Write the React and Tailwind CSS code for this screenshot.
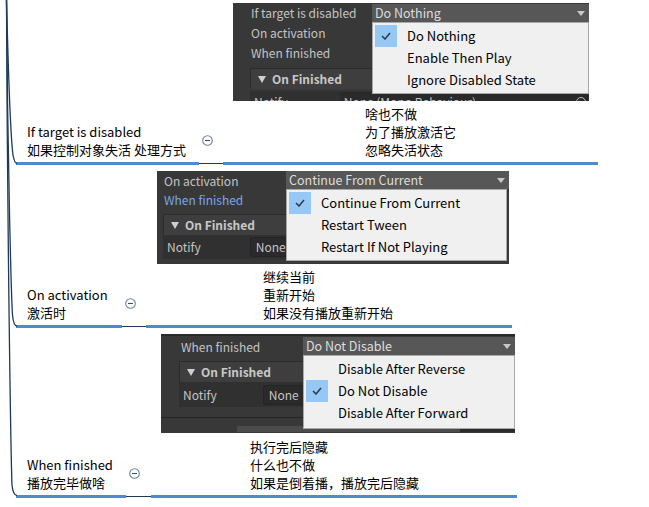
import React from 'react';

const Check = () => (
  <svg width="10" height="8" viewBox="0 0 10 8" fill="none">
    <polyline points="1,4 4,7 9,1" stroke="#2c3846" strokeWidth="1.5" />
  </svg>
);

const Arrow = () => (
  <svg width="8" height="5" viewBox="0 0 8 5">
    <polygon points="0,0 8,0 4,5" fill="#c8c8c8" />
  </svg>
);

const Tri = () => (
  <svg width="8" height="7" viewBox="0 0 8 7">
    <polygon points="0,0 8,0 4,7" fill="#cfcfcf" />
  </svg>
);

const Collapse = () => (
  <svg width="11" height="11" viewBox="0 0 11 11" className="mb-[13px] shrink-0">
    <circle cx="5.5" cy="5.5" r="4.8" fill="#fff" stroke="#6e84a0" strokeWidth="1.1" />
    <line x1="3" y1="5.5" x2="8" y2="5.5" stroke="#3c4f66" strokeWidth="1.1" />
  </svg>
);

function Dropdown({ value }) {
  return (
    <div className="flex h-[18px] items-center justify-between bg-[#575757] pl-[3px] pr-[4px] text-[12.5px] text-[#dedede]">
      <span>{value}</span>
      <Arrow />
    </div>
  );
}

function Popup({ items, className }) {
  return (
    <div className={`absolute border border-[#a8a8a8] bg-[#f0f0f0] pt-[2px] ${className}`}>
      {items.map((it) => (
        <div key={it.label} className="flex h-[22px] items-center">
          <div
            className={`ml-[2px] flex h-[22px] w-[22px] items-center justify-center ${
              it.checked ? 'bg-[#96c8f6]' : ''
            }`}
          >
            {it.checked && <Check />}
          </div>
          <span className="ml-[10px] text-[13px] text-black">{it.label}</span>
        </div>
      ))}
    </div>
  );
}

function Header() {
  return (
    <div className="flex h-[21px] items-center gap-[6px] border-l border-t border-[#2b2b2b] bg-[#3e3e3e] pl-[7px] text-[12px] font-bold text-[#c8c8c8]">
      <Tri />
      <span>On Finished</span>
    </div>
  );
}

function Underline({ a, b, c }) {
  return (
    <div className="mt-[3px] flex h-[3px] items-center">
      <div className={`ml-[16px] h-[3px] bg-[#5288d0] ${a}`} />
      <div className={`h-[1px] bg-[#1f3a58] ${b}`} />
      <div className={`h-[3px] bg-[#5288d0] ${c}`} />
    </div>
  );
}

function Notes({ lines, className }) {
  return (
    <div className={`text-[13px] leading-[18px] text-black ${className}`}>
      {lines.map((l) => (
        <div key={l}>{l}</div>
      ))}
    </div>
  );
}

export default function App() {
  return (
    <div className="relative h-[507px] w-[649px] overflow-hidden bg-white font-['Noto_Sans_CJK_SC','Noto_Sans',sans-serif] whitespace-nowrap">
      {/* connectors from the parent topic above */}
      <svg className="pointer-events-none absolute left-0 top-0" width="24" height="507" fill="none">
        <path d="M6.5 0 C8 60 11 140 13 155 Q14.5 163.5 17 163.5" stroke="#1f3a58" strokeWidth="1.3" />
        <path d="M6.5 0 C7.5 150 11 290 12.5 315 Q13.5 326 17 326" stroke="#1f3a58" strokeWidth="1.3" />
        <path d="M6.5 0 C7.5 250 11 460 12 485 Q13 495.5 17 495.5" stroke="#1f3a58" strokeWidth="1.3" />
      </svg>

      {/* section 1 */}
      <div className="pt-[3px]">
        <div className="relative ml-[233px] h-[98px] w-[356px] overflow-hidden bg-[#383838] text-[12px]">
          <div className="flex h-[88px]">
            <div className="flex w-[139px] flex-col pl-[17px] text-[#c4c4c4]">
              <div className="h-[20px] pl-[1px] leading-[20px]">If target is disabled</div>
              <div className="h-[20px] pl-[1px] leading-[20px]">On activation</div>
              <div className="h-[20px] pl-[1px] leading-[20px]">When finished</div>
              <div className="mt-[5px]">
                <Header />
              </div>
            </div>
            <div className="flex-1 pt-[1px]">
              <Dropdown value="Do Nothing" />
            </div>
          </div>
          <div className="ml-[17px] flex h-[22px] items-center bg-[#303030] text-[#c4c4c4]">
            <span className="pl-[4px]">Notify</span>
            <div className="ml-[52px] flex h-[20px] flex-1 items-center justify-between rounded-[3px] bg-[#2a2a2a] pl-[4px] pr-[3px]">
              <span>None (Mono Behaviour)</span>
              <span className="h-[10px] w-[10px] rounded-full border border-[#bbb]" />
            </div>
          </div>
          <Popup
            className="left-[139px] top-[19px] h-[72px] w-[217px]"
            items={[
              { label: 'Do Nothing', checked: true },
              { label: 'Enable Then Play' },
              { label: 'Ignore Disabled State' },
            ]}
          />
        </div>
        <div className="flex items-end">
          <div className="w-[202px] pl-[27px] text-[13px] leading-[18px] text-black">
            <div>If target is disabled</div>
            <div>如果控制对象失活 处理方式</div>
          </div>
          <Collapse />
          <Notes className="ml-[152px] mt-[4px]" lines={['啥也不做', '为了播放激活它', '忽略失活状态']} />
        </div>
        <Underline a="w-[183px]" b="w-[24px]" c="w-[375px]" />
      </div>

      {/* section 2 */}
      <div className="mt-[6px]">
        <div className="relative ml-[157px] h-[93px] w-[352px] overflow-hidden bg-[#383838] text-[12px]">
          <div className="flex">
            <div className="flex w-[129px] flex-col pl-[6px]">
              <div className="h-[19px] pl-[1px] leading-[19px] text-[#c4c4c4]">On activation</div>
              <div className="h-[19px] pl-[1px] leading-[19px] text-[#79a6eb]">When finished</div>
              <div className="mt-[5px]">
                <Header />
              </div>
              <div className="flex h-[24px] items-center bg-[#303030] text-[#c4c4c4]">
                <span className="pl-[4px]">Notify</span>
                <div className="ml-[49px] flex h-[20px] flex-1 items-center rounded-l-[3px] border border-r-0 border-[#242424] bg-[#2a2a2a] pl-[5px]">
                  None
                </div>
              </div>
            </div>
            <div className="flex-1">
              <Dropdown value="Continue From Current" />
            </div>
          </div>
          <Popup
            className="left-[129px] top-[18px] h-[72px] w-[221px]"
            items={[
              { label: 'Continue From Current', checked: true },
              { label: 'Restart Tween' },
              { label: 'Restart If Not Playing' },
            ]}
          />
        </div>
        <div className="flex items-end">
          <div className="w-[125px] pl-[27px] text-[13px] leading-[18px] text-black">
            <div>On activation</div>
            <div>激活时</div>
          </div>
          <Collapse />
          <Notes className="ml-[127px] mt-[4px]" lines={['继续当前', '重新开始', '如果没有播放重新开始']} />
        </div>
        <Underline a="w-[106px]" b="w-[24px]" c="w-[366px]" />
      </div>

      {/* section 3 */}
      <div className="mt-[6px]">
        <div className="relative ml-[161px] h-[99px] w-[354px] overflow-hidden border-t-[2px] border-[#2a2a2a] bg-[#383838] text-[12px]">
          <div className="flex pt-[1px]">
            <div className="flex w-[142px] flex-col">
              <div className="h-[20px] pl-[20px] leading-[20px] text-[#c4c4c4]">When finished</div>
              <div className="ml-[18px] mt-[4px]">
                <Header />
                <div className="flex h-[25px] items-center bg-[#303030] text-[#c4c4c4]">
                  <span className="pl-[4px]">Notify</span>
                  <div className="ml-[46px] flex h-[20px] flex-1 items-center rounded-l-[3px] border border-r-0 border-[#242424] bg-[#2a2a2a] pl-[5px]">
                    None
                  </div>
                </div>
              </div>
              <div className="mt-[10px] h-[1px] bg-[#242424]" />
            </div>
            <div className="flex-1">
              <Dropdown value="Do Not Disable" />
            </div>
          </div>
          <div className="mt-[8px] flex h-[6px]">
            <div className="ml-[76px] w-[223px] bg-[#4b4b4b]" />
            <div className="flex-1 bg-[#2c2c2c]" />
          </div>
          <Popup
            className="left-[142px] top-[19px] h-[74px] w-[212px]"
            items={[
              { label: 'Disable After Reverse' },
              { label: 'Do Not Disable', checked: true },
              { label: 'Disable After Forward' },
            ]}
          />
        </div>
        <div className="flex items-end">
          <div className="w-[129px] pl-[27px] text-[13px] leading-[18px] text-black">
            <div>When finished</div>
            <div>播放完毕做啥</div>
          </div>
          <Collapse />
          <Notes className="ml-[110px] mt-[5px]" lines={['执行完后隐藏', '什么也不做', '如果是倒着播，播放完后隐藏']} />
        </div>
        <Underline a="w-[110px]" b="w-[25px]" c="w-[366px]" />
      </div>
    </div>
  );
}
